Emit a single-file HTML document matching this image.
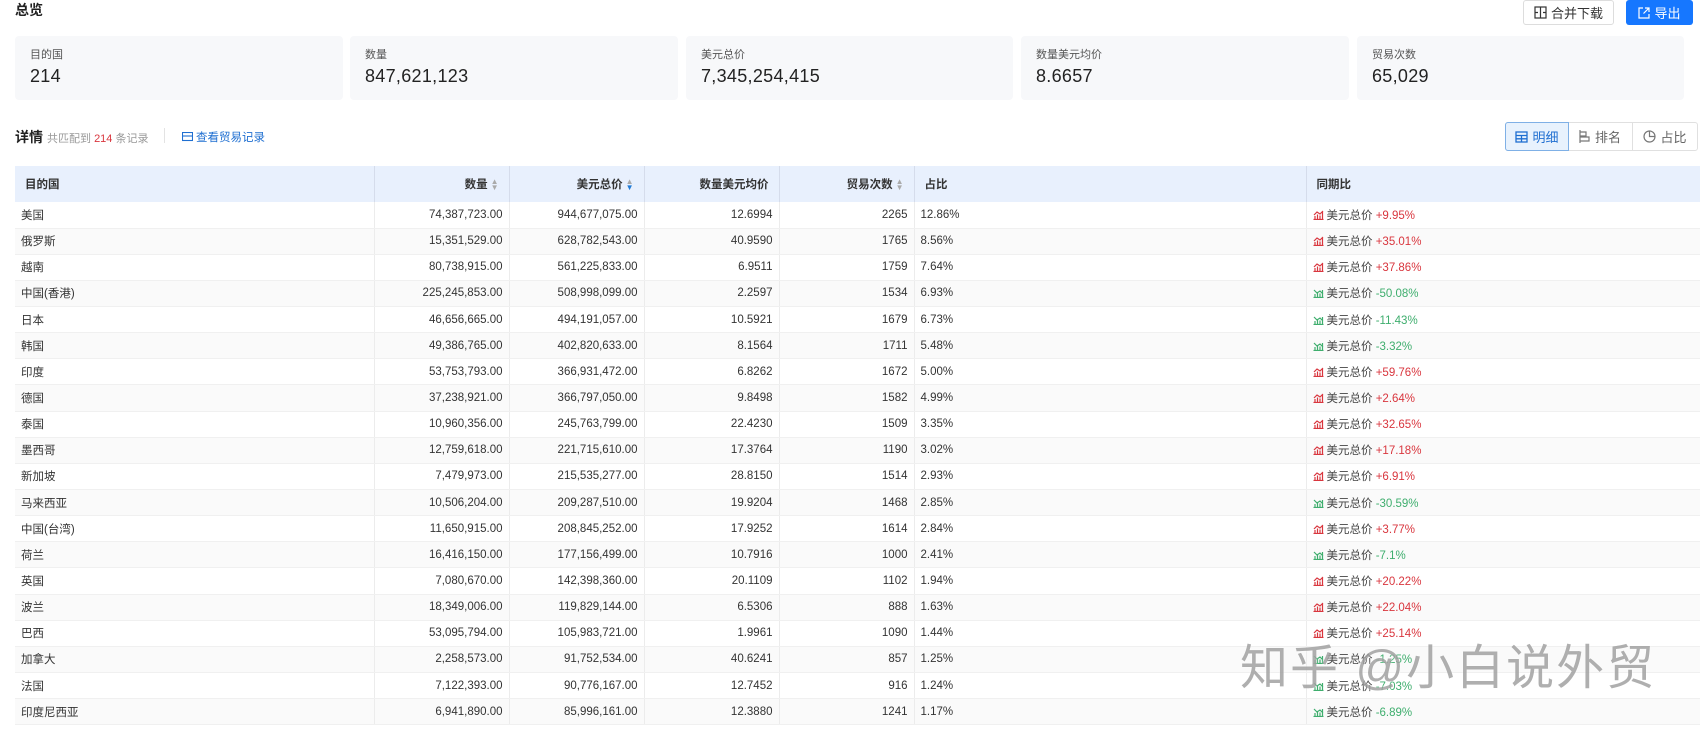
<!DOCTYPE html>
<html><head><meta charset="utf-8"><style>
*{margin:0;padding:0;box-sizing:border-box}
body{width:1702px;height:729px;overflow:hidden;background:#fff;font-family:"Liberation Sans","Noto Sans CJK SC",sans-serif;color:#333;position:relative}
.abs{position:absolute}
.title{left:15px;top:0px;font-size:14px;font-weight:bold;color:#222}
.btn{top:0;height:25px;border-radius:3px;font-size:13px;display:flex;align-items:center;justify-content:center;gap:4px}
.card{top:36px;height:64px;width:328px;background:#f7f8fa;border-radius:4px;padding:10px 15px}
.card .l{font-size:11px;color:#555}
.card .v{font-size:18px;color:#222;margin-top:4px;letter-spacing:.3px}
table{position:absolute;left:15px;top:166px;width:1685px;border-collapse:collapse;table-layout:fixed;font-size:11.5px}
th{height:36px;background:#e8f0fd;font-weight:bold;color:#333;border-right:1px solid #d5dceb;padding:0 10px;font-size:11.5px}
td{height:26.15px;padding:0 6px;border-right:1px solid #ececec;border-bottom:1px solid #f0f0f0;white-space:nowrap}
tr:nth-child(even) td{background:#fafafa}
.r{text-align:right}
.up{color:#d9363e}.dn{color:#3fae6e}
.ar{display:inline-block;font-size:8px;color:#aaa;line-height:6px;vertical-align:middle;margin-left:3px}
.ic{display:inline-block;width:11px;height:10px;vertical-align:-1px;margin-right:3px}
</style></head><body>
<div class="abs title">总览</div>
<div class="abs btn" style="left:1523px;width:91px;border:1px solid #ddd;color:#333">
<svg width="13" height="13" viewBox="0 0 13 13" fill="none" stroke="#333" stroke-width="1.2"><rect x="1" y="1" width="11" height="11"/><path d="M6.5 1v11M1 6.5h3M9 6.5h3"/></svg>合并下载</div>
<div class="abs btn" style="left:1626px;width:67px;background:#1677ff;color:#fff">
<svg width="12" height="12" viewBox="0 0 12 12" fill="none" stroke="#fff" stroke-width="1.2"><path d="M5 1H1v10h10V7M7 1h4v4M11 1L5.5 6.5"/></svg>导出</div>

<div class="abs card" style="left:15px"><div class="l">目的国</div><div class="v">214</div></div>
<div class="abs card" style="left:350px"><div class="l">数量</div><div class="v">847,621,123</div></div>
<div class="abs card" style="left:686px;width:327px"><div class="l">美元总价</div><div class="v">7,345,254,415</div></div>
<div class="abs card" style="left:1021px"><div class="l">数量美元均价</div><div class="v">8.6657</div></div>
<div class="abs card" style="left:1357px;width:327px"><div class="l">贸易次数</div><div class="v">65,029</div></div>

<div class="abs" style="left:15px;top:127px;font-size:14px;font-weight:bold;color:#222">详情</div>
<div class="abs" style="left:47px;top:130px;font-size:11px;color:#999">共匹配到 <span style="color:#d9363e">214</span> 条记录</div>
<div class="abs" style="left:164px;top:128px;width:1px;height:15px;background:#e3e3e3"></div>
<div class="abs" style="left:182px;top:129px;font-size:11.5px;color:#1f6fd1"><svg width="11" height="10" viewBox="0 0 11 10" fill="none" stroke="#1f6fd1" stroke-width="1.1" style="vertical-align:-1px;margin-right:3px"><rect x="0.5" y="0.5" width="10" height="8"/><path d="M0.5 4h10"/></svg>查看贸易记录</div>

<div class="abs" style="left:1505px;top:122px;width:193px;height:29px;border:1px solid #e0e0e0;border-radius:3px;display:flex;font-size:13px">
<div style="width:64px;background:#e8f2fd;border:1px solid #7fb0e6;margin:-1px;border-radius:3px 0 0 3px;color:#1f6fd1;display:flex;align-items:center;justify-content:center;gap:4px"><svg width="13" height="12" viewBox="0 0 13 12" fill="none" stroke="#1f6fd1" stroke-width="1.3"><rect x="1" y="1" width="11" height="10"/><path d="M1 4.5h11M1 7.8h11M6.5 4.5v6.5"/></svg>明细</div>
<div style="width:65px;border-right:1px solid #e0e0e0;color:#666;display:flex;align-items:center;justify-content:center;gap:4px"><svg width="12" height="13" viewBox="0 0 12 13" fill="none" stroke="#777" stroke-width="1.2"><path d="M1 0v13M1 2h6v4H1M1 7h9v4H1"/></svg>排名</div>
<div style="flex:1;color:#666;display:flex;align-items:center;justify-content:center;gap:4px"><svg width="13" height="13" viewBox="0 0 13 13" fill="none" stroke="#777" stroke-width="1.2"><circle cx="6.5" cy="6.5" r="5.5"/><path d="M6.5 1v5.5H12"/></svg>占比</div>
</div>

<table>
<colgroup><col style="width:359px"><col style="width:135px"><col style="width:135px"><col style="width:135px"><col style="width:135px"><col style="width:392px"><col></colgroup>
<tr><th style="text-align:left">目的国</th><th class="r">数量<span class="ar">▲<br>▼</span></th><th class="r">美元总价<span class="ar">▲<br><span style="color:#1f7ad6">▼</span></span></th><th class="r">数量美元均价</th><th class="r">贸易次数<span class="ar">▲<br>▼</span></th><th style="text-align:left">占比</th><th style="text-align:left;border-right:none">同期比</th></tr>
<tbody id="tb"></tbody>
</table>
<script>
var d=[["美国","74,387,723.00","944,677,075.00","12.6994","2265","12.86%","+9.95%"],
["俄罗斯","15,351,529.00","628,782,543.00","40.9590","1765","8.56%","+35.01%"],
["越南","80,738,915.00","561,225,833.00","6.9511","1759","7.64%","+37.86%"],
["中国(香港)","225,245,853.00","508,998,099.00","2.2597","1534","6.93%","-50.08%"],
["日本","46,656,665.00","494,191,057.00","10.5921","1679","6.73%","-11.43%"],
["韩国","49,386,765.00","402,820,633.00","8.1564","1711","5.48%","-3.32%"],
["印度","53,753,793.00","366,931,472.00","6.8262","1672","5.00%","+59.76%"],
["德国","37,238,921.00","366,797,050.00","9.8498","1582","4.99%","+2.64%"],
["泰国","10,960,356.00","245,763,799.00","22.4230","1509","3.35%","+32.65%"],
["墨西哥","12,759,618.00","221,715,610.00","17.3764","1190","3.02%","+17.18%"],
["新加坡","7,479,973.00","215,535,277.00","28.8150","1514","2.93%","+6.91%"],
["马来西亚","10,506,204.00","209,287,510.00","19.9204","1468","2.85%","-30.59%"],
["中国(台湾)","11,650,915.00","208,845,252.00","17.9252","1614","2.84%","+3.77%"],
["荷兰","16,416,150.00","177,156,499.00","10.7916","1000","2.41%","-7.1%"],
["英国","7,080,670.00","142,398,360.00","20.1109","1102","1.94%","+20.22%"],
["波兰","18,349,006.00","119,829,144.00","6.5306","888","1.63%","+22.04%"],
["巴西","53,095,794.00","105,983,721.00","1.9961","1090","1.44%","+25.14%"],
["加拿大","2,258,573.00","91,752,534.00","40.6241","857","1.25%","-1.25%"],
["法国","7,122,393.00","90,776,167.00","12.7452","916","1.24%","-7.03%"],
["印度尼西亚","6,941,890.00","85,996,161.00","12.3880","1241","1.17%","-6.89%"]];
var h="";d.forEach(function(r){var up=r[6][0]=="+",c=up?"#d9363e":"#3fae6e";
h+="<tr><td>"+r[0]+"</td><td class=r>"+r[1]+"</td><td class=r>"+r[2]+"</td><td class=r>"+r[3]+"</td><td class=r>"+r[4]+"</td><td>"+r[5]+"</td><td style='border-right:none'><svg class=ic viewBox='0 0 11 10' fill='none' stroke='"+c+"' stroke-width='1.2'><path d='M0.5 9.5h10M2 9V6M4.5 9V4.5M7 9V5.5M9.5 9V2"+(up?"M1 5l3-3 3 2 3-3":"M1 2l3 3 3-2 3 3")+"'/></svg><span style='color:#444'>美元总价</span> <span class="+(up?"up":"dn")+">"+r[6]+"</span></td></tr>";});
document.getElementById("tb").innerHTML=h;
</script>
<div class="abs" style="left:1240px;top:628px;font-size:48px;color:rgba(110,110,110,.55);letter-spacing:2px;white-space:nowrap;text-shadow:0 0 2px rgba(255,255,255,.8)">知乎 @小白说外贸</div>
</body></html>
